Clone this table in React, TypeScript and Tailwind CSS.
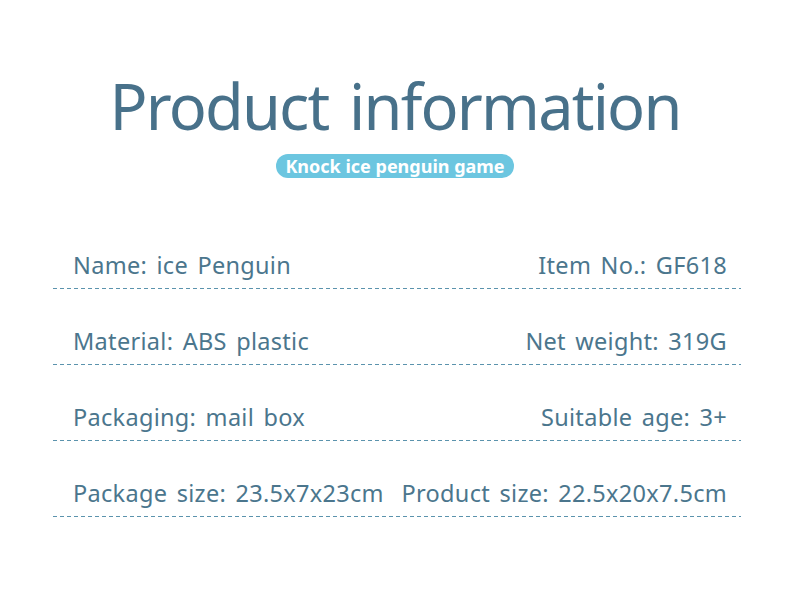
import React from "react";

const rows = [
  ["Name: ice Penguin", "Item No.: GF618"],
  ["Material: ABS plastic", "Net weight: 319G"],
  ["Packaging: mail box", "Suitable age: 3+"],
  ["Package size: 23.5x7x23cm", "Product size: 22.5x20x7.5cm"],
];

const App = () => {
  return (
    <div className="w-[790px] h-[600px] bg-white font-['Noto_Sans',sans-serif] text-[#4b768d] overflow-hidden">
      {/* TITLE */}
      <div className="flex flex-col items-center pt-[62px]">
        <h1 className="text-[63px] leading-[88px] tracking-[-1.8px] [word-spacing:6px] text-[#48718a]">Product information</h1>
        <div className="mt-[4px] h-[24px] px-[9px] rounded-full bg-[#6cc6e0] flex items-center">
          <span className="text-[18px] font-bold text-white leading-none">Knock ice penguin game</span>
        </div>
      </div>
      {/* LIST */}
      <div className="mt-[35px] ml-[53px] w-[688px] flex flex-col">
        {rows.map(([left, right]) => (
          <div key={left} className="h-[76px] flex flex-col justify-end">
            <div className="flex justify-between pl-[20px] pr-[14px] text-[23.5px] leading-[32px] tracking-[0.3px] [word-spacing:3px]">
              <span>{left}</span>
              <span>{right}</span>
            </div>
            <div className="mt-[7px] h-px bg-[repeating-linear-gradient(to_right,#5b93ad_0_4px,transparent_4px_7px)]" />
          </div>
        ))}
      </div>
    </div>
  );
};

export default App;
